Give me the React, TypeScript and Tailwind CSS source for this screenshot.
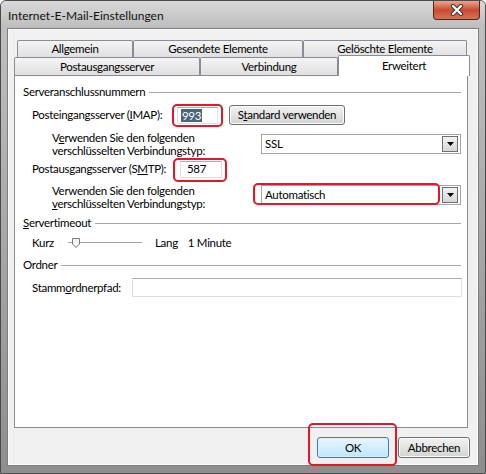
import React from "react";

const font = { fontFamily: "Lato, 'Liberation Sans', sans-serif" };

function Tab({ label, w }: { label: string; w: string }) {
  return (
    <div
      className={`${w} h-full border-l border-t border-r border-[#898c95] rounded-t-[2px] bg-gradient-to-b from-[#f4f4f4] to-[#e0e0e0] flex items-center justify-center whitespace-nowrap`}
    >
      {label}
    </div>
  );
}

function GroupHeader({ children, mt }: { children: React.ReactNode; mt: string }) {
  return (
    <div className={`${mt} h-[14px] pl-[8px] pr-[6px] flex items-center`}>
      <span className="leading-[14px] whitespace-nowrap">{children}</span>
      <div className="flex-1 ml-[4px] h-px bg-[#a9a9a9]" />
    </div>
  );
}

function TextBox({ w, h, children }: { w: string; h: string; children?: React.ReactNode }) {
  return (
    <div
      className={`${w} ${h} bg-white border border-[#dbdfe6] border-t-[#abadb3] flex items-center pl-[3px]`}
    >
      {children}
    </div>
  );
}

function ArrowButton() {
  return (
    <div className="w-[16px] h-[16px] mr-[2px] border border-[#707070] bg-gradient-to-b from-[#f2f2f2] to-[#d6d6d6] flex items-center justify-center">
      <svg width="7" height="4" viewBox="0 0 7 4">
        <path d="M0 0 H7 L3.5 4 Z" fill="#000" />
      </svg>
    </div>
  );
}

function Combo({ value }: { value: string }) {
  return (
    <div className="w-[200px] h-[20px] bg-white border border-[#a5a5a5] flex items-center justify-between">
      <span className="pl-[3px]">{value}</span>
      <ArrowButton />
    </div>
  );
}

function RedMark({ className }: { className: string }) {
  return (
    <div
      className={`absolute border-2 border-[#e3162b] rounded-[5px] pointer-events-none ${className}`}
    />
  );
}

function WinButton({
  children,
  isDefault,
}: {
  children: React.ReactNode;
  isDefault?: boolean;
}) {
  return (
    <div
      className={`w-[72px] h-[21px] rounded-[3px] border flex items-center justify-center ${
        isDefault
          ? "border-[#3c7fb1] bg-gradient-to-b from-[#eaf6fd] to-[#bee6fd] shadow-[inset_0_0_0_1px_#d9f0fc]"
          : "border-[#707070] bg-gradient-to-b from-[#f2f2f2] to-[#d4d4d4] shadow-[inset_0_0_0_1px_#fcfcfc]"
      }`}
    >
      {children}
    </div>
  );
}

export default function App() {
  return (
    <div
      className="w-[486px] h-[474px] overflow-hidden bg-gradient-to-b from-[#c2c2c2] to-[#8e8e8e] rounded-t-[6px] border border-[#4a4a4a] flex flex-col text-[11.5px] tracking-[-0.3px] text-black"
      style={font}
    >
      {/* title bar */}
      <div className="h-[27px] shrink-0 bg-gradient-to-b from-[#d9d9d9] to-[#bdbdbd] flex items-start justify-between">
        <div className="pl-[7px] pt-[7px] text-[12px] tracking-normal leading-[15px] text-[#111] whitespace-nowrap">
          Internet-E-Mail-Einstellungen
        </div>
        <div className="mr-[5px] w-[47px] h-[19px] rounded-b-[4px] border border-t-0 border-[#5a2218] bg-gradient-to-b from-[#eaa592] via-[#c94a30] to-[#d6725a] flex items-center justify-center">
          <svg width="14" height="12" viewBox="0 0 14 12">
            <path d="M3 2 L11 10 M11 2 L3 10" stroke="#3a3a3a" strokeWidth="4.2" strokeLinecap="round" />
            <path d="M3 2 L11 10 M11 2 L3 10" stroke="#ffffff" strokeWidth="2.2" strokeLinecap="round" />
          </svg>
        </div>
      </div>

      {/* client area */}
      <div className="ml-[6px] w-[472px] h-[438px] bg-[#f0f0f0] border border-[#7d7d7d] shadow-[inset_0_0_0_1px_#fbfbfb] flex flex-col">
        {/* tabs row 1 */}
        <div className="mt-[11px] ml-[9px] h-[17px] flex">
          <Tab label="Allgemein" w="w-[116px]" />
          <Tab label="Gesendete Elemente" w="w-[170px]" />
          <Tab label="Gelöschte Elemente" w="w-[164px]" />
        </div>
        {/* tabs row 2 */}
        <div className="ml-[6px] h-[18px] flex items-start">
          <Tab label="Postausgangsserver" w="w-[186px]" />
          <Tab label="Verbindung" w="w-[138px]" />
          <div className="relative z-10 -mt-[2px] w-[132px] h-[21px] bg-white border-l border-t border-r border-[#898c95] rounded-t-[2px] flex justify-center pt-[2px] leading-[15px]">
            Erweitert
          </div>
        </div>

        {/* panel */}
        <div className="ml-[6px] w-[454px] h-[353px] bg-white border border-[#898c95] flex flex-col">
          <GroupHeader mt="mt-[9px]">Serveranschlussnummern</GroupHeader>

          <div className="mt-[4px] h-[24px] pl-[17px] flex items-center">
            <span className="w-[140px] whitespace-nowrap">
              Posteingangsserver (<u>I</u>MAP):
            </span>
            <div className="relative ml-[5px]">
              <TextBox w="w-[41px]" h="h-[17px]">
                <span className="bg-[#4d6379] text-white leading-[13px] px-[1px]">993</span>
              </TextBox>
              <RedMark className="-left-[5px] -right-[5px] -top-[3px] -bottom-[3px]" />
            </div>
            <div className="ml-[11px] w-[116px] h-[20px] rounded-[3px] border border-[#707070] bg-gradient-to-b from-[#f2f2f2] to-[#d4d4d4] shadow-[inset_0_0_0_1px_#fcfcfc] flex items-center justify-center">
              <span className="whitespace-nowrap">
                S<u>t</u>andard verwenden
              </span>
            </div>
          </div>

          <div className="mt-[3px] h-[27px] pl-[37px] flex items-center">
            <div className="w-[209px] leading-[13px] whitespace-nowrap">
              V<u>e</u>rwenden Sie den folgenden
              <br />
              verschlüsselten Verbindungstyp:
            </div>
            <Combo value="SSL" />
          </div>

          <div className="h-[24px] pl-[17px] flex items-center">
            <span className="w-[148px] whitespace-nowrap">
              Postausgangsserver (S<u>M</u>TP):
            </span>
            <div className="relative">
              <TextBox w="w-[42px]" h="h-[17px]">
                <span className="pl-[3px]">587</span>
              </TextBox>
              <RedMark className="-left-[7px] -right-[5px] -top-[3px] -bottom-[4px]" />
            </div>
          </div>

          <div className="mt-[2px] h-[26px] pl-[37px] flex items-start">
            <div className="w-[209px] leading-[13px] pt-[1px] whitespace-nowrap">
              Verwenden Sie den folgenden
              <br />
              <u>v</u>erschlüsselten Verbindungstyp:
            </div>
            <div className="relative mt-[2px]">
              <Combo value="Automatisch" />
              <RedMark className="-left-[8px] right-[21px] -top-[2px] bottom-0" />
            </div>
          </div>

          <GroupHeader mt="mt-[7px]">
            <u>S</u>ervertimeout
          </GroupHeader>

          <div className="mt-[6px] h-[14px] pl-[17px] flex items-center">
            <span className="w-[36px]">Kurz</span>
            <div className="relative w-[74px] h-[14px] flex items-center">
              <div className="w-full h-[2px] border-t border-[#a0a0a0] border-b border-b-[#ffffff] bg-[#e3e3e3]" />
              <svg className="absolute left-[4px] top-[2px]" width="8" height="10" viewBox="0 0 8 10">
                <path d="M0.5 0.5 H7.5 V6 L4 9.5 L0.5 6 Z" fill="#f4f4f4" stroke="#7a7a7a" />
              </svg>
            </div>
            <span className="ml-[13px]">Lang</span>
            <span className="ml-[10px] whitespace-nowrap">1 Minute</span>
          </div>

          <GroupHeader mt="mt-[8px]">Ordner</GroupHeader>

          <div className="mt-[6px] h-[19px] pl-[17px] flex items-center">
            <span className="w-[100px] whitespace-nowrap">
              Stamm<u>o</u>rdnerpfad:
            </span>
            <TextBox w="w-[330px]" h="h-[19px]" />
          </div>
        </div>

        {/* dialog buttons */}
        <div className="mt-[9px] pr-[8px] flex justify-end gap-[9px]">
          <div className="relative">
            <WinButton isDefault>OK</WinButton>
            <RedMark className="-left-[9px] -right-[8px] -top-[14px] -bottom-[8px]" />
          </div>
          <WinButton>Abbrechen</WinButton>
        </div>
      </div>
    </div>
  );
}
